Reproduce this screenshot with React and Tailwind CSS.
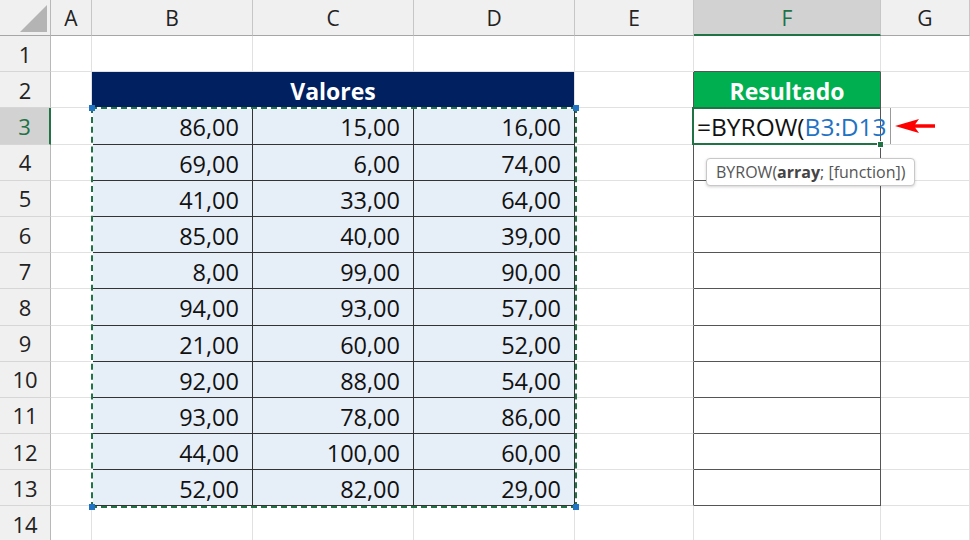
import React from "react";

const data = [
  [86, 15, 16],
  [69, 6, 74],
  [41, 33, 64],
  [85, 40, 39],
  [8, 99, 90],
  [94, 93, 57],
  [21, 60, 52],
  [92, 88, 54],
  [93, 78, 86],
  [44, 100, 60],
  [52, 82, 29],
];

const fmt = (n) => `${n},00`;

const grid = "border-r border-b border-[#e1e1e1]";
const colHead =
  "flex items-center justify-center pt-[3px] bg-[#f0f0f0] border-r border-r-[#c6c6c6] border-b border-b-[#a6a6a6] text-[21px] text-[#222]";
const colHeadActive =
  "flex items-center justify-center pt-[3px] bg-[#d2d2d2] border-r border-r-[#c6c6c6] border-b-2 border-b-[#217346] text-[21px] text-[#217346]";
const rowHead =
  "flex items-center justify-center pt-[1px] bg-[#f0f0f0] border-r border-r-[#b8b8b8] border-b border-b-[#d6d6d6] text-[22px] text-[#222]";
const rowHeadActive =
  "flex items-center justify-center pt-[1px] bg-[#d2d2d2] border-r-2 border-r-[#217346] border-b border-b-[#d6d6d6] text-[22px] text-[#217346]";
const numCell =
  "bg-[#e6eef8] border-r border-b border-[#333] text-right pr-[13px] pt-[2px] text-[23.5px] leading-[34px] text-[#111]";

const Corner = () => (
  <div className="bg-[#f0f0f0] border-r border-r-[#b8b8b8] border-b border-b-[#a6a6a6] relative">
    <svg width="50" height="35" className="absolute left-0 top-0">
      <polygon points="20,32 47,32 47,5" fill="#b4b4b4" />
    </svg>
  </div>
);

const ActiveCell = () => (
  <div className="relative z-10 border-r border-b border-[#555]">
    {/* active cell frame, open on the right where the editor overflows */}
    <div className="absolute -left-[2px] -top-[1px] w-[calc(100%+2px)] h-[calc(100%+2px)] border-l-2 border-t-2 border-b-2 border-[#217346]" />
    <span className="absolute left-[3px] top-[1px] whitespace-nowrap text-[24.5px] leading-[36px] text-[#111]">
      =BYROW(<span className="text-[#1f72c4]">B3:D13</span>
    </span>
    <div className="absolute left-[196px] top-0 h-full w-px bg-[#9a9a9a]" />
    <div className="absolute -right-[4px] -bottom-[4px] w-[7px] h-[7px] bg-[#217346] border border-white" />
  </div>
);

const App = () => {
  const rows = [];
  for (let r = 1; r <= 14; r++) {
    const d = r >= 3 && r <= 13 ? data[r - 3] : null;
    rows.push(
      <React.Fragment key={r}>
        <div className={r === 3 ? rowHeadActive : rowHead}>{r}</div>
        <div className={grid} />
        {r === 2 ? (
          <div className="col-span-3 bg-[#002060] text-white font-bold text-[23px] text-center pt-[2px] leading-[34px] border-b border-b-[#002060] border-r border-r-[#e1e1e1]">
            Valores
          </div>
        ) : d ? (
          d.map((v, i) => (
            <div key={i} className={numCell}>
              {fmt(v)}
            </div>
          ))
        ) : (
          <>
            <div className={grid} />
            <div className={grid} />
            <div className={grid} />
          </>
        )}
        <div
          className={
            r >= 2 && r <= 13
              ? "border-b border-b-[#e1e1e1] border-r border-r-[#555]"
              : grid
          }
        />
        {r === 1 ? (
          <div className="border-r border-r-[#e1e1e1] border-b border-b-[#555]" />
        ) : r === 2 ? (
          <div className="bg-[#00b050] text-white font-bold text-[23px] text-center pt-[2px] leading-[34px] border-r border-b border-[#555]">
            Resultado
          </div>
        ) : r === 3 ? (
          <ActiveCell />
        ) : r <= 13 ? (
          <div className="bg-white border-r border-b border-[#555]" />
        ) : (
          <div className={grid} />
        )}
        <div className={grid} />
      </React.Fragment>
    );
  }

  return (
    <div className="w-[970px] h-[540px] overflow-hidden bg-white font-['Open_Sans',sans-serif]">
      <div className="relative grid grid-cols-[51px_41px_161px_161px_161px_119px_187px_1fr] grid-rows-[36px_repeat(14,36.2px)]">
        <Corner />
        {["A", "B", "C", "D", "E", "F", "G"].map((c) => (
          <div key={c} className={c === "F" ? colHeadActive : colHead}>
            {c}
          </div>
        ))}
        {rows}

        {/* copy / reference range marching ants */}
        <div className="absolute left-[91px] top-[107px] w-[486px] h-[401px] border-2 border-white pointer-events-none z-20">
          <div className="absolute -inset-[2px] border-2 border-dashed border-[#217346]" />
          <div className="absolute -left-[4px] -top-[4px] w-[6px] h-[6px] bg-[#1f72c4]" />
          <div className="absolute -right-[4px] -top-[4px] w-[6px] h-[6px] bg-[#1f72c4]" />
          <div className="absolute -left-[4px] -bottom-[4px] w-[6px] h-[6px] bg-[#1f72c4]" />
          <div className="absolute -right-[4px] -bottom-[4px] w-[6px] h-[6px] bg-[#1f72c4]" />
        </div>

        {/* function tooltip */}
        <div className="absolute left-[706px] top-[158px] h-[28px] px-[9px] rounded-[4px] border border-[#c8c8c8] bg-white shadow-[0_1px_3px_rgba(0,0,0,0.18)] z-30 text-[16px] leading-[26px] text-[#555] whitespace-nowrap">
          BYROW(<span className="font-bold text-[#444]">array</span>; [function])
        </div>

        {/* red arrow */}
        <svg
          width="44"
          height="18"
          viewBox="0 0 44 18"
          className="absolute left-[894px] top-[117px] z-30"
        >
          <line x1="14" y1="9" x2="41" y2="9" stroke="#ff0000" strokeWidth="3.5" />
          <polygon points="1,9 25,2 20,9 25,16" fill="#ff0000" />
        </svg>
      </div>
    </div>
  );
};

export default App;
